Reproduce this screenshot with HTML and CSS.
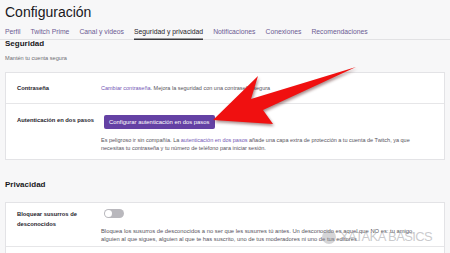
FILE: index.html
```html
<!DOCTYPE html>
<html lang="es">
<head>
  <meta charset="UTF-8">
  <meta name="viewport" content="width=device-width, initial-scale=1.0">
  <title>Configuración</title>
  <link rel="stylesheet" href="styles.css">
</head>
<body>
  <h1 class="title">Configuración</h1>
  <nav class="tabs">
    <a class="tab">Perfil</a>
    <a class="tab">Twitch Prime</a>
    <a class="tab">Canal y videos</a>
    <a class="tab active">Seguridad y privacidad</a>
    <a class="tab">Notificaciones</a>
    <a class="tab">Conexiones</a>
    <a class="tab">Recomendaciones</a>
  </nav>

  <h2 class="section-title">Seguridad</h2>
  <p class="section-sub">Mantén tu cuenta segura</p>
  <div class="card">
    <div class="row row-short">
      <div class="label">Contraseña</div>
      <div class="content">
        <p class="desc"><a class="link">Cambiar contraseña</a>. Mejora la seguridad con una contraseña segura</p>
      </div>
    </div>
    <div class="row">
      <div class="label">Autenticación en dos pasos</div>
      <div class="content">
        <button class="btn">Configurar autenticación en dos pasos</button>
        <p class="desc">Es peligroso ir sin compañía. La <a class="link">autenticación en dos pasos</a> añade una capa extra de protección a tu cuenta de Twitch, ya que necesitas tu contraseña y tu número de teléfono para iniciar sesión.</p>
      </div>
    </div>
  </div>

  <h2 class="section-title privacy">Privacidad</h2>
  <div class="card card-open">
    <div class="row row-toggle">
      <div class="label">Bloquear susurros de desconocidos</div>
      <div class="content">
        <span class="toggle"><span class="knob"></span></span>
        <p class="desc desc-narrow">Bloquea los susurros de desconocidos a no ser que les susurres tú antes. Un desconocido es aquel que NO es: tu amigo, alguien al que sigues, alguien al que te has suscrito, uno de tus moderadores ni uno de tus editores.</p>
      </div>
    </div>
    <div class="row row-empty"></div>
  </div>

  <div class="watermark"><span class="wm-logo"></span>XATAKA BASICS</div>

  <svg class="arrow" width="450" height="253" viewBox="0 0 450 253">
    <polygon points="213,120 258,76 251,99 356,67 263,110 273,124" fill="#f01010"/>
  </svg>
</body>
</html>
```

FILE: styles.css
```css
body {
  font-family: 'Liberation Sans', Arial, sans-serif;
  background: #f7f7f8;
  color: #19171c;
  margin: 0;
  padding: 0 5px;
  height: 253px;
  overflow: hidden;
  position: relative;
}

.title {
  font-size: 14px;
  font-weight: normal;
  line-height: 20px;
  margin: 0;
  padding-top: 2px;
}

.tabs {
  display: flex;
  gap: 10px;
  height: 17px;
  align-items: center;
  border-bottom: 1px solid #e2e2e4;
  margin: 0 -5px;
  padding: 0 5px;
}

.tab {
  font-size: 6.8px;
  color: #6c5b93;
  line-height: 17px;
  padding-top: 2px;
}

.tab.active {
  color: #26232b;
  box-shadow: inset 0 -1.5px 0 #3a3a3d;
}

.section-title {
  font-size: 8px;
  font-weight: bold;
  margin: 0;
  line-height: 8px;
}

.section-title.privacy {
  margin-top: 21px;
  margin-bottom: 13px;
}

.section-sub {
  font-size: 5.6px;
  line-height: 6px;
  color: #6e6c73;
  margin: 7px 0 11px;
}

.card {
  background: #fff;
  border: 1px solid #e3e3e6;
}

.card-open {
  border-bottom: none;
}

.row {
  display: grid;
  grid-template-columns: 84px 1fr;
  padding: 11px 11px 7px;
  border-top: 1px solid #e6e6e8;
}

.row:first-child {
  border-top: none;
}

.row-short {
  padding: 10px 11px;
}

.row-short .desc {
  line-height: 10px;
}

.row-toggle {
  padding: 6px 11px 3px;
}

.row-empty {
  height: 20px;
}

.label {
  font-size: 5.8px;
  font-weight: bold;
  color: #26232b;
  line-height: 10px;
  padding-right: 2px;
}

.content {
  display: flex;
  flex-direction: column;
  align-items: flex-start;
}

.desc {
  font-size: 5.5px;
  color: #56535c;
  line-height: 8px;
  margin: 0;
  max-width: 334px;
}

.desc-narrow {
  font-size: 5.8px;
  max-width: 318px;
}

.link {
  color: #7356b4;
}

.btn {
  font-family: inherit;
  font-size: 5.9px;
  color: #fff;
  background: #6441a4;
  border: none;
  border-radius: 2px;
  height: 14px;
  padding: 0 5px;
  margin: 0 0 7px 3px;
}

.toggle {
  display: inline-block;
  width: 20px;
  height: 9px;
  border-radius: 5px;
  background: #b9b8bd;
  margin: 0 0 9px 3px;
  position: relative;
}

.knob {
  position: absolute;
  left: 1px;
  top: 1px;
  width: 7px;
  height: 7px;
  border-radius: 50%;
  background: #fff;
}

.watermark {
  position: absolute;
  left: 322px;
  top: 229px;
  display: flex;
  align-items: center;
  gap: 4px;
  font-size: 13px;
  letter-spacing: -0.6px;
  color: rgba(150, 150, 155, 0.5);
}

.wm-logo {
  display: inline-block;
  width: 14px;
  height: 14px;
  border-radius: 50%;
  background: rgba(150, 150, 155, 0.4);
}

.arrow {
  position: absolute;
  left: 0;
  top: 0;
  filter: drop-shadow(1px 2px 1.5px rgba(60, 0, 0, 0.45));
}
```
